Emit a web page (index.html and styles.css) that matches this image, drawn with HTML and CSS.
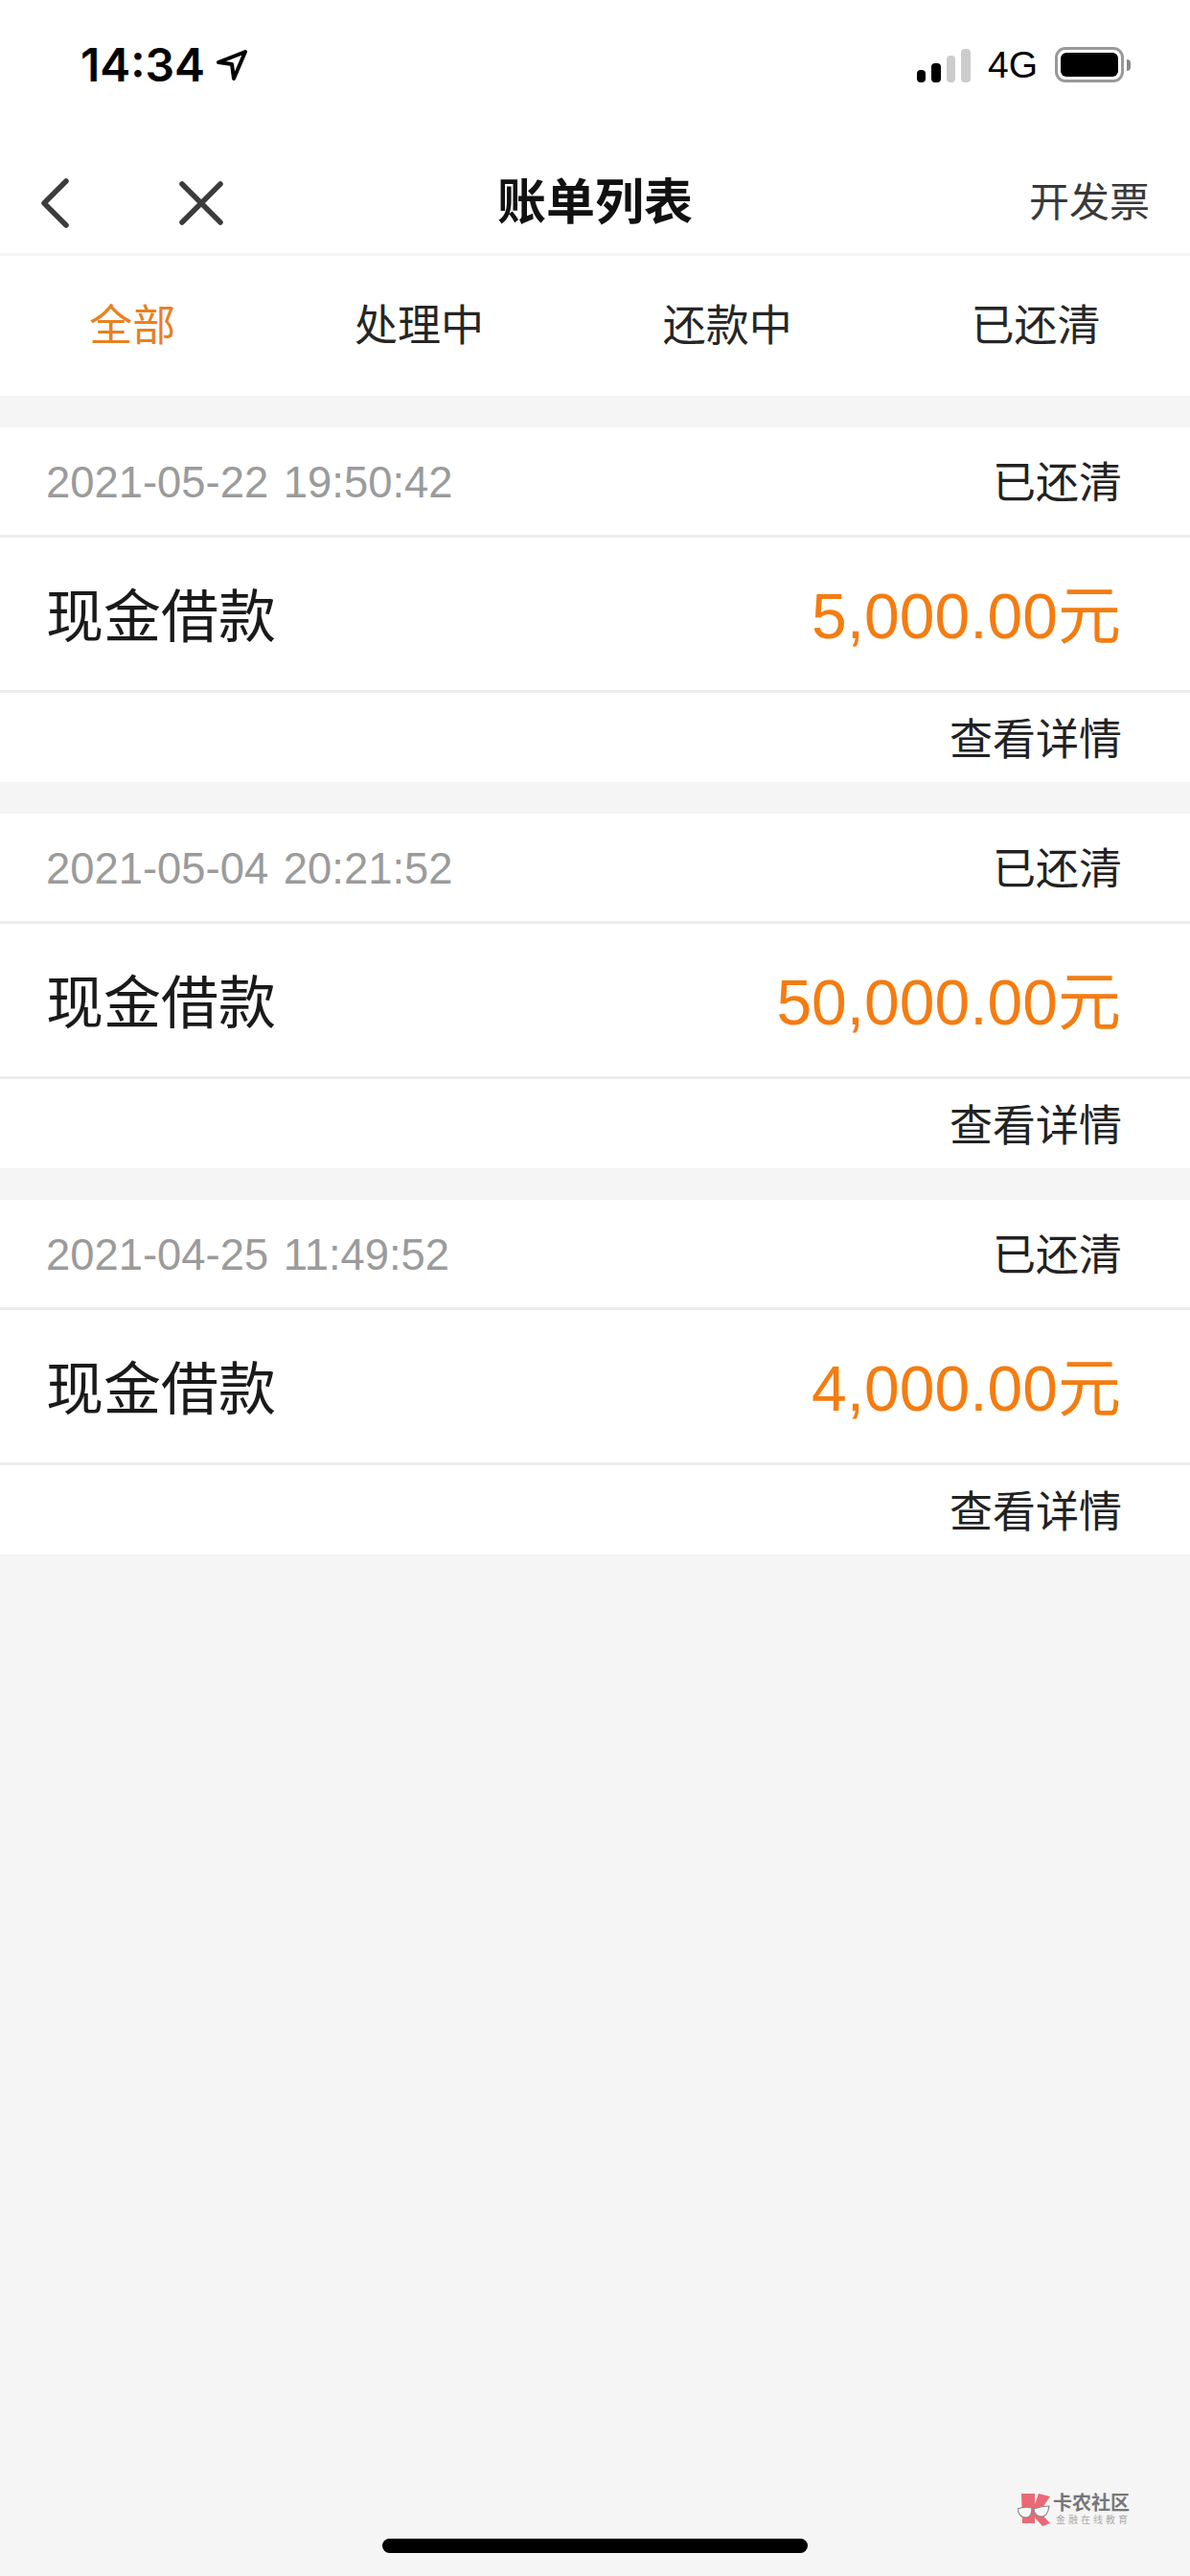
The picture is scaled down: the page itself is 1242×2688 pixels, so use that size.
FILE: index.html
```html
<!DOCTYPE html>
<html lang="zh-CN">
<head>
<meta charset="utf-8">
<title>账单列表</title>
<link rel="stylesheet" href="styles.css">
</head>
<body>
<div class="page">
  <header class="status">
    <div class="status-left">
      <span class="time">14:34</span>
      <svg class="loc" viewBox="0 0 32 32"><path d="M2 13 30 2 18 30 16 15Z" fill="none" stroke="#000" stroke-width="4" stroke-linejoin="round"/></svg>
    </div>
    <div class="status-right">
      <div class="signal"><i class="bar b1"></i><i class="bar b2"></i><i class="bar b3"></i><i class="bar b4"></i></div>
      <span class="net">4G</span>
      <div class="battery"><div class="battery-fill"></div></div>
      <div class="nub"></div>
    </div>
  </header>
  <nav class="nav">
    <div class="nav-left">
      <svg class="ic-back" viewBox="0 0 30 52"><path d="M27 3 4 26l23 23" fill="none" stroke="#3c3c3c" stroke-width="5.5" stroke-linecap="round" stroke-linejoin="round"/></svg>
      <svg class="ic-close" viewBox="0 0 46 46"><path d="M3 3l40 40M43 3 3 43" fill="none" stroke="#3c3c3c" stroke-width="5.5" stroke-linecap="round"/></svg>
    </div>
    <h1 class="title">账单列表</h1>
    <a class="invoice">开发票</a>
  </nav>
  <div class="tabs">
    <span class="tab active">全部</span>
    <span class="tab">处理中</span>
    <span class="tab">还款中</span>
    <span class="tab">已还清</span>
  </div>
  <main class="list">
    <section class="card">
      <div class="row head"><span class="date">2021-05-22 19:50:42</span><span class="state">已还清</span></div>
      <div class="row body"><span class="name">现金借款</span><span class="amount">5,000.00元</span></div>
      <div class="row foot"><span class="more">查看详情</span></div>
    </section>
    <section class="card">
      <div class="row head"><span class="date">2021-05-04 20:21:52</span><span class="state">已还清</span></div>
      <div class="row body"><span class="name">现金借款</span><span class="amount">50,000.00元</span></div>
      <div class="row foot"><span class="more">查看详情</span></div>
    </section>
    <section class="card">
      <div class="row head"><span class="date">2021-04-25 11:49:52</span><span class="state">已还清</span></div>
      <div class="row body"><span class="name">现金借款</span><span class="amount">4,000.00元</span></div>
      <div class="row foot"><span class="more">查看详情</span></div>
    </section>
  </main>
  <div class="mark">
    <svg class="mark-logo" viewBox="0 0 34 36">
      <path d="M4 1h14v11l4-11 12 3-8 12-4 3 12 13-8 3-8-9v6H5z" fill="#e96a75"/>
      <path d="M0 17c5-2 11-2 15-1 0 6-2 10-6 10-5 0-8-4-9-9zM17 17c5-2 11-3 16-3-1 7-3 11-8 11-4 0-8-3-8-8z" fill="#f7f7f7" stroke="#8a8a8a" stroke-width="1.2"/>
    </svg>
    <div class="mark-text">
      <span class="mark-name">卡农社区</span>
      <span class="mark-sub">金融在线教育</span>
    </div>
  </div>
  <div class="home"></div>
</div>
</body>
</html>
```
FILE: styles.css
```css
* { box-sizing: border-box; margin: 0; padding: 0; }
html, body { width: 1242px; height: 2688px; overflow: hidden; }
body { font-family: "Liberation Sans", "Noto Sans CJK SC", sans-serif; background: #f5f5f5; color: #1c1c1c; }
.page { position: relative; width: 1242px; height: 2688px; background: #f5f5f5; }

.status { height: 100px; background: #fff; display: flex; justify-content: space-between; align-items: flex-start; padding: 46px 62px 0 84px; }
.status-left { display: flex; align-items: center; gap: 12px; height: 44px; }
.time { font-family: Inter, "Liberation Sans", sans-serif; font-weight: 600; font-size: 48px; line-height: 44px; color: #000; }
.loc { width: 32px; height: 32px; }
.status-right { display: flex; align-items: flex-end; height: 40px; }
.signal { display: flex; align-items: flex-end; gap: 6px; height: 36px; }
.bar { display: block; width: 9.5px; border-radius: 4px; background: #000; }
.b1 { height: 13px; }
.b2 { height: 20px; }
.b3 { height: 28px; background: #ccc; }
.b4 { height: 35px; background: #ccc; }
.net { font-size: 39px; line-height: 36px; margin: 0 18px; color: #000; }
.battery { width: 72px; height: 37px; border: 3px solid #999; border-radius: 11px; padding: 3px; }
.battery-fill { height: 100%; background: #000; border-radius: 6px; }
.nub { width: 4px; height: 12px; background: #888; border-radius: 0 4px 4px 0; margin: 0 0 12px 3px; }

.nav { height: 164px; padding: 60px 42px 0; background: #fff; display: grid; grid-template-columns: 1fr auto 1fr; align-items: center; }
.nav-left { display: flex; align-items: center; gap: 115px; }
.ic-back { width: 30px; height: 52px; }
.ic-close { width: 46px; height: 46px; }
.title { font-size: 51px; font-weight: 700; color: #111; line-height: 60px; }
.invoice { justify-self: end; font-size: 42px; color: #3a3a3a; line-height: 50px; }

.tabs { height: 149px; border-top: 3px solid #f5f5f5; background: #fff; display: flex; justify-content: space-around; align-items: center; font-size: 45px; }
.tab { color: #262626; margin-bottom: 8px; }
.tab.active { color: #e8811f; }

.list { display: flex; flex-direction: column; gap: 33px; padding-top: 33px; }
.card { background: #fff; }
.row { display: flex; justify-content: space-between; align-items: center; padding: 0 71px 0 48px; }
.head { height: 112px; }
.body { height: 162px; border-top: 3px solid #ededf0; }
.foot { height: 96px; border-top: 3px solid #ededf0; justify-content: flex-end; }
.date { font-size: 45.4px; word-spacing: 3px; color: #9b9b9b; margin-top: 3px; }
.state { font-size: 45px; color: #222; margin-bottom: 3px; }
.more { font-size: 45px; color: #222; margin-bottom: 2px; }
.name { font-size: 60px; color: #1a1a1a; margin-bottom: 5px; }
.amount { font-size: 66px; color: #f57c10; margin: 0 1px 7px 0; }

.mark { position: absolute; left: 1062px; top: 2601px; display: flex; gap: 3px; }
.mark-logo { width: 34px; height: 36px; }
.mark-text { display: flex; flex-direction: column; }
.mark-name { font-size: 20px; line-height: 22px; font-weight: 700; color: #777; white-space: nowrap; }
.mark-sub { font-size: 10px; line-height: 14px; color: #aaa; letter-spacing: 3px; white-space: nowrap; margin-left: 3px; }
.home { position: absolute; left: 399px; top: 2649px; width: 444px; height: 15px; border-radius: 8px; background: #000; }
```
